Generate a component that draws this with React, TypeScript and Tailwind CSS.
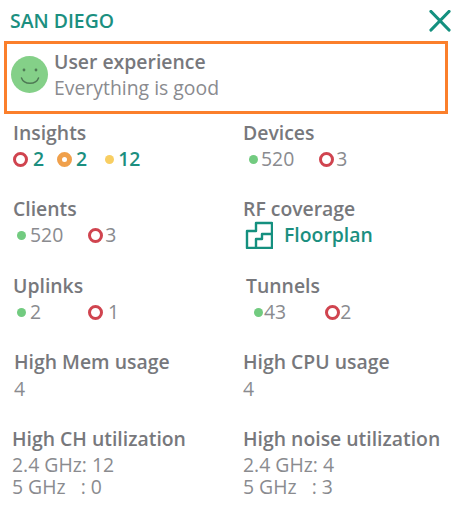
import React from 'react';

const Ring = ({ color }: { color: string }) => (
  <span className={`inline-block w-[15px] h-[15px] rounded-full ${color}`}></span>
);

const Dot = ({ color }: { color: string }) => (
  <span className={`inline-block w-[9px] h-[9px] rounded-full ${color}`}></span>
);

const Title = ({ children }: { children: React.ReactNode }) => (
  <div className="h-[24px] leading-[24px] text-[19.4px] font-semibold text-[#77787c] whitespace-nowrap">{children}</div>
);

const Num = ({ children, className = '' }: { children: React.ReactNode; className?: string }) => (
  <span className={`text-[19.4px] leading-[24px] text-[#8a8b8f] ${className}`}>{children}</span>
);

const TealNum = ({ children, className = '' }: { children: React.ReactNode; className?: string }) => (
  <span className={`text-[19.4px] leading-[24px] font-semibold text-[#1b8f80] ${className}`}>{children}</span>
);

export default function App() {
  return (
    <div className="relative w-[470px] h-[505px] bg-white overflow-hidden" style={{ fontFamily: '"Open Sans", sans-serif' }}>
      {/* Header */}
      <div className="flex items-center justify-between h-[41px] pl-[10px] pr-[19px]">
        <span className="text-[19.4px] font-semibold text-[#1b8f80]">SAN DIEGO</span>
        <svg width="22" height="22" viewBox="0 0 22 22" fill="none" stroke="#14907f" strokeWidth="3.2" strokeLinecap="round">
          <path d="M2 1.5 L20 20" />
          <path d="M20 1.5 L2 20" />
        </svg>
      </div>

      {/* User experience */}
      <div className="flex items-center w-[444px] h-[73px] ml-[4px] border-[3px] border-[#fb7f2b] pl-[4px]">
        <div className="flex items-center justify-center w-[37px] h-[37px] -mt-[6px] rounded-full bg-[#84d088] shrink-0">
          <svg width="24" height="24" viewBox="0 0 24 24" fill="none" stroke="#4f7a55" strokeWidth="1.5" strokeLinecap="round">
            <circle cx="6" cy="7" r="1.4" fill="#4f7a55" stroke="none" />
            <circle cx="18" cy="7" r="1.4" fill="#4f7a55" stroke="none" />
            <path d="M3.5 15 C6 22 18 22 20.5 15" />
          </svg>
        </div>
        <div className="ml-[6px] -mt-[5px]">
          <div className="text-[19.4px] leading-[26px] font-semibold text-[#77787c]">User experience</div>
          <div className="text-[19.4px] leading-[26px] text-[#8a8b8f]">Everything is good</div>
        </div>
      </div>

      {/* Stats */}
      <div className="grid grid-cols-[230px_1fr] pl-[13px] pt-[7px]">
        <div className="h-[76px]">
          <Title>Insights</Title>
          <div className="flex items-center h-[26px] mt-[1px]">
            <Ring color="border-[3px] border-[#d0444f]" />
            <TealNum className="ml-[5px]">2</TealNum>
            <span className="ml-[13px] flex"><Ring color="border-[5px] border-[#f0a04b]" /></span>
            <TealNum className="ml-[4px]">2</TealNum>
            <span className="ml-[18px] flex"><Dot color="bg-[#f8ce62]" /></span>
            <TealNum className="ml-[4px]">12</TealNum>
          </div>
        </div>
        <div>
          <Title>Devices</Title>
          <div className="flex items-center h-[26px] mt-[1px] pl-[6px]">
            <Dot color="bg-[#72cb80]" />
            <Num className="ml-[3px]">520</Num>
            <span className="ml-[25px] flex"><Ring color="border-[3px] border-[#d0444f]" /></span>
            <Num className="ml-[2px]">3</Num>
          </div>
        </div>

        <div className="h-[77px]">
          <Title>Clients</Title>
          <div className="flex items-center h-[26px] mt-[1px] pl-[4px]">
            <Dot color="bg-[#72cb80]" />
            <Num className="ml-[4px]">520</Num>
            <span className="ml-[25px] flex"><Ring color="border-[3px] border-[#d0444f]" /></span>
            <Num className="ml-[2px]">3</Num>
          </div>
        </div>
        <div>
          <Title>RF coverage</Title>
          <div className="flex items-center h-[26px] mt-[1px] pl-[2px]">
            <svg width="28" height="28" viewBox="0 0 28 28" fill="none" stroke="#14907f" strokeWidth="2.4" strokeLinejoin="round">
              <path d="M11 2 H27 V27 H2 V10 H11 Z" />
              <path d="M27 13 H17 V18 H11 V27" />
            </svg>
            <span className="ml-[11px] text-[19.4px] font-semibold text-[#1b8f80]">Floorplan</span>
          </div>
        </div>

        <div className="h-[76px]">
          <Title>Uplinks</Title>
          <div className="flex items-center h-[26px] mt-[1px] pl-[4px]">
            <Dot color="bg-[#72cb80]" />
            <Num className="ml-[4px]">2</Num>
            <span className="ml-[47px] flex"><Ring color="border-[3px] border-[#d0444f]" /></span>
            <Num className="ml-[5px]">1</Num>
          </div>
        </div>
        <div className="pl-[3px]">
          <Title>Tunnels</Title>
          <div className="flex items-center h-[26px] mt-[1px] pl-[8px]">
            <Dot color="bg-[#72cb80]" />
            <Num className="ml-[1px]">43</Num>
            <span className="ml-[39px] flex"><Ring color="border-[3px] border-[#d0444f]" /></span>
            <Num>2</Num>
          </div>
        </div>

        <div className="h-[77px] pl-[1px]">
          <Title>High Mem usage</Title>
          <div className="mt-[3px]"><Num>4</Num></div>
        </div>
        <div>
          <Title>High CPU usage</Title>
          <div className="mt-[3px]"><Num>4</Num></div>
        </div>

        <div className="-ml-[1px]">
          <Title>High CH utilization</Title>
          <div className="mt-[3px] text-[19.4px] leading-[22px] text-[#8a8b8f] whitespace-pre">
            <div>2.4 GHz: 12</div>
            <div>5 GHz   : 0</div>
          </div>
        </div>
        <div>
          <Title>High noise utilization</Title>
          <div className="mt-[3px] text-[19.4px] leading-[22px] text-[#8a8b8f] whitespace-pre">
            <div>2.4 GHz: 4</div>
            <div>5 GHz   : 3</div>
          </div>
        </div>
      </div>
    </div>
  );
}
